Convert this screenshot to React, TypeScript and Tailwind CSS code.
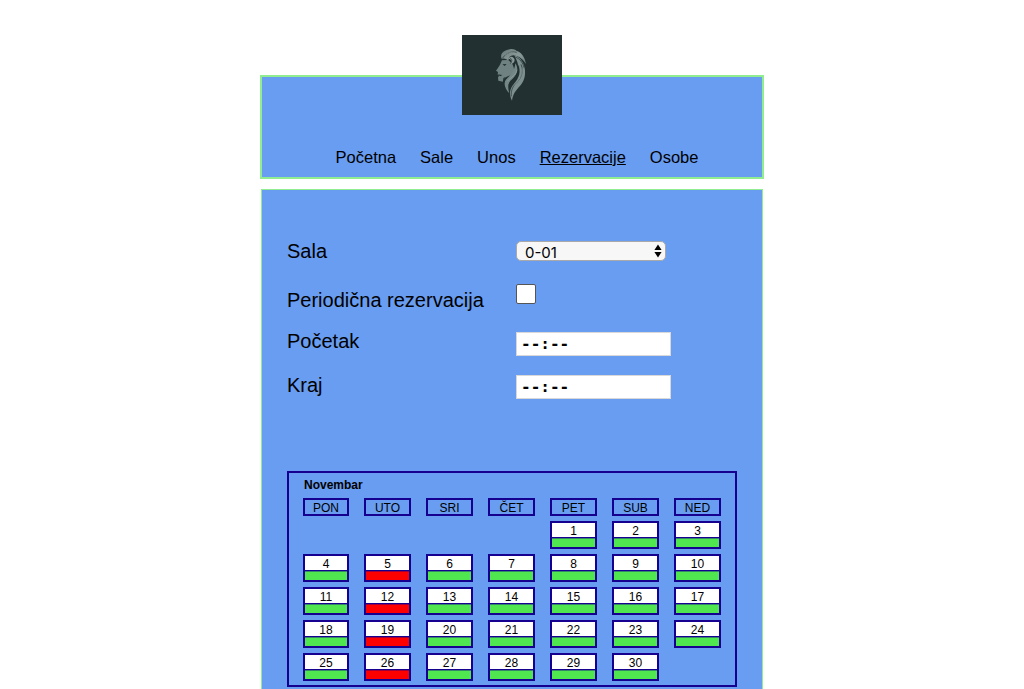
const NAV = ["Početna", "Sale", "Unos", "Rezervacije", "Osobe"];
const WEEKDAYS = ["PON", "UTO", "SRI", "ČET", "PET", "SUB", "NED"];
const DAYS = Array.from({ length: 30 }, (_, i) => i + 1);
const BUSY = [5, 12, 19, 26];

function Logo() {
  return (
    <svg className="absolute left-[200px] top-[-42px] h-20 w-[100px] bg-[#223031]" viewBox="30 30 300 240" aria-hidden="true">
      <defs>
        <linearGradient id="mane" x1="0" y1="0" x2="1" y2="1">
          <stop offset="0" stopColor="#667978" />
          <stop offset="0.55" stopColor="#899998" />
          <stop offset="1" stopColor="#6b7e7d" />
        </linearGradient>
      </defs>
      <path fill="#6f8281" d="M150 106C146 114 145 121 132 137L138 141L137 149L143 152L138 156L139 167L152 170L158 159C166 153 180 151 186 140C188 126 180 110 166 105Z" />
      <path fill="url(#mane)" d="M149 101C143 88 154 76 173 73C183 71 189 74 193 77C209 80 220 100 222 117C209 97 196 93 184 91C172 92 169 99 170 108C165 101 157 99 149 101Z" />
      <path fill="#7d908f" d="M187 91C203 96 215 110 218 130C222 151 216 171 203 184C191 197 183 207 180 227C171 208 172 192 186 176C202 158 208 139 198 119C196 109 192 101 187 91Z" />
      <path fill="#748786" d="M190 115C202 133 194 151 181 162C166 174 167 188 172 205C159 191 154 176 161 165C170 154 187 145 190 115Z" />
      <path fill="#899a99" d="M170 101C174 91 187 95 188 105C187 114 181 117 176 116C181 108 177 102 170 101Z" />
      <path fill="none" stroke="#223031" strokeWidth="2" d="M152 99C162 82 181 79 194 82M190 96C204 101 213 113 216 128M207 118C218 144 203 165 190 177C180 187 177 200 178 214M200 122C204 152 176 163 170 181M174 99C182 103 180 110 175 116" />
      <path fill="#223031" d="M151 118L164 117L158 123ZM137 148L151 150L145 154ZM154 160L158 156L158 171L153 174Z" />
      <path fill="none" stroke="#9cabaa" strokeWidth="1.5" d="M158 91C167 82 180 81 191 85M210 130C214 150 197 170 187 181M195 134C194 149 174 158 167 169" />
    </svg>
  );
}

function TimeField() {
  return (
    <div className="flex h-6 w-[155px] items-center border border-[#d8d8d8] bg-white pl-1 font-['DejaVu_Sans_Mono',monospace] text-base font-bold leading-5">
      --:--
    </div>
  );
}

export default function App() {
  return (
    <div className="h-[689px] overflow-hidden bg-white pt-[75px] font-['Liberation_Sans',Arial,sans-serif] text-black">
      <header className="relative mx-auto flex h-[104px] w-[504px] items-end justify-center border-2 border-[#90ee90] bg-[#699df1] pb-[10px] pl-[10px]">
        <Logo />
        <nav className="flex gap-6 text-[16.5px] leading-5">
          {NAV.map((item) => (
            <a key={item} className={item === "Rezervacije" ? "underline" : ""}>{item}</a>
          ))}
        </nav>
      </header>

      <main className="mx-auto mt-[10px] h-[520px] w-[502px] border border-[#90ee90] bg-[#699df1] px-[25px] pt-[51px]">
        <div className="grid h-[230px] grid-cols-[229px_1fr] grid-rows-[43px_48px_43px_96px] text-xl leading-5">
          <span>Sala</span>
          <div className="flex h-5 w-[150px] items-center justify-between rounded-[5px] border border-[#a9a9a9] bg-[#f7f7f7] pl-2 pr-[3px]">
            <span className="pt-[3px] font-['Inter',sans-serif] text-[15px] leading-5">0-01</span>
            <svg className="h-[14px] w-2" viewBox="0 0 8 14" aria-hidden="true">
              <path d="M4 0.5L7.6 6H0.4ZM4 13.5L0.4 8H7.6Z" />
            </svg>
          </div>
          <span className="pt-[6px]">Periodična rezervacija</span>
          <div className="h-5 w-5 rounded-[2px] border border-[#555] bg-white" />
          <span className="-mt-px">Početak</span>
          <TimeField />
          <span>Kraj</span>
          <TimeField />
        </div>

        <section className="h-[216px] w-[450px] border-2 border-[#150090] px-[14px] pt-1 text-xs">
          <h2 className="h-[21px] pl-px text-xs font-bold leading-4">Novembar</h2>
          <div className="grid grid-cols-[46px_repeat(6,47px)] gap-x-[15px] gap-y-[5px] text-center">
            {WEEKDAYS.map((day) => (
              <div key={day} className="h-[18px] border-2 border-[#150090] leading-4">{day}</div>
            ))}
            {DAYS.map((day) => (
              <div key={day} className={`h-7 border-2 border-[#150090] bg-white ${day === 1 ? "col-start-5" : ""}`}>
                <div className="h-[14px] leading-4">{day}</div>
                <div className={`h-[10px] border-t border-[#150090] ${BUSY.includes(day) ? "bg-[#ff0000] shadow-[inset_0_1px_0_#a0003a]" : "bg-[#50e650] shadow-[inset_0_1px_0_#358668]"}`} />
              </div>
            ))}
          </div>
        </section>
      </main>
    </div>
  );
}
